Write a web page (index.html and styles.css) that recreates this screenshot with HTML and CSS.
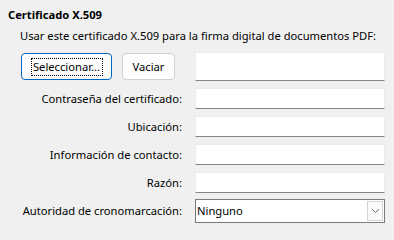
FILE: index.html
```html
<!DOCTYPE html>
<html lang="es">
<head>
<meta charset="utf-8">
<link rel="stylesheet" href="styles.css">
</head>
<body>
<div class="panel">
  <div class="title">Certificado X.509</div>
  <div class="content">
    <div class="desc">Usar este certificado X.509 para la firma digital de documentos PDF:</div>
    <div class="grid">
      <div class="buttons">
        <button class="btn primary"><span class="focus">Seleccionar...</span></button>
        <button class="btn secondary">Vaciar</button>
      </div>
      <div class="field tall"></div>

      <div class="label">Contraseña del certificado:</div>
      <div class="field"></div>

      <div class="label">Ubicación:</div>
      <div class="field"></div>

      <div class="label">Información de contacto:</div>
      <div class="field"></div>

      <div class="label">Razón:</div>
      <div class="field"></div>

      <div class="label">Autoridad de cronomarcación:</div>
      <div class="select">
        <span class="value">Ninguno</span>
        <span class="drop">
          <svg width="9" height="6" viewBox="0 0 9 6"><path d="M1 1.2 L4.5 4.5 L8 1.2" fill="none" stroke="#6a6a6a" stroke-width="1"/></svg>
        </span>
      </div>
    </div>
  </div>
</div>
</body>
</html>
```

FILE: styles.css
```css
html, body {
  margin: 0;
  padding: 0;
  background: #f0f0f0;
}
body {
  width: 394px;
  height: 231px;
  overflow: hidden;
  font-family: "Noto Sans", "Open Sans", sans-serif;
  font-size: 11.2px;
  color: #000;
}
.panel {
  padding: 7px 0 0 8px;
}
.title {
  font-weight: bold;
  line-height: 16px;
  height: 16px;
}
.content {
  padding-left: 12px;
  margin-top: 5px;
}
.desc {
  line-height: 16px;
  height: 16px;
}
.grid {
  margin-top: 8px;
  display: grid;
  grid-template-columns: 162px 190px;
  column-gap: 13px;
  row-gap: 7px;
  grid-auto-rows: 21px;
  grid-template-rows: 29px;
  align-items: center;
}
.buttons {
  display: flex;
  gap: 10px;
  align-items: center;
  padding-left: 1px;
}
.btn {
  font: inherit;
  color: #000;
  height: 27px;
  border-radius: 4px;
  padding: 0;
  margin: 0;
  display: flex;
  align-items: center;
  justify-content: center;
  box-sizing: border-box;
}
.primary {
  width: 91px;
  background: #fdfdfd;
  border: 1px solid #0067c0;
}
.focus {
  display: inline-block;
  border: 1px dotted #000;
  line-height: 16px;
  padding: 0 1px;
  width: 72px;
  box-sizing: border-box;
  text-align: center;
}
.secondary {
  width: 53px;
  background: #fdfdfd;
  border: 1px solid #d0d0d0;
}
.label {
  text-align: right;
  line-height: 16px;
  white-space: nowrap;
}
.field {
  height: 21px;
  background: #fff;
  border: 1px solid #ececec;
  border-bottom: 1px solid #868686;
  box-sizing: border-box;
}
.field.tall {
  height: 29px;
}
.select {
  height: 24px;
  background: #fff;
  border: 1px solid #7a7a7a;
  box-sizing: border-box;
  display: flex;
  align-items: center;
  justify-content: space-between;
  padding: 0 1px 0 1px;
}
.value {
  line-height: 16px;
}
.drop {
  width: 16px;
  height: 20px;
  box-sizing: border-box;
  border: 1px solid #d4d4d4;
  background: #fafafa;
  display: flex;
  align-items: center;
  justify-content: center;
}
```
